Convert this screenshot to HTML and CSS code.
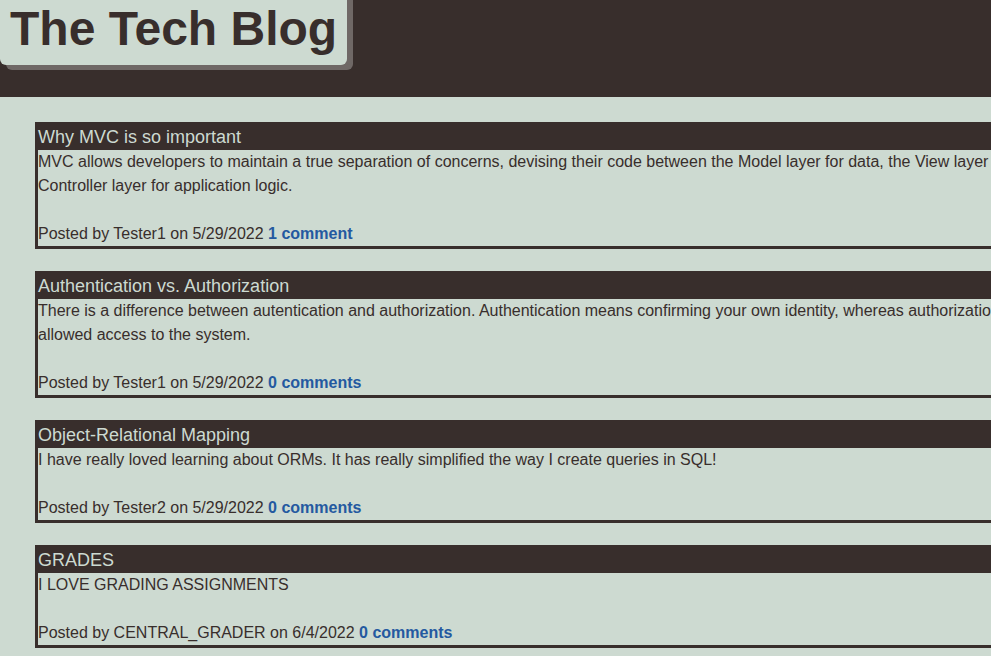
FILE: index.html
```html
<!DOCTYPE html>
<html lang="en">
<head>
<meta charset="utf-8">
<meta name="viewport" content="width=device-width, initial-scale=1">
<title>The Tech Blog</title>
<link rel="stylesheet" href="styles.css">
</head>
<body>
<header class="site-header">
  <h1 class="site-title">The Tech Blog</h1>
</header>
<main class="posts">
  <article class="post">
    <h2 class="post-title">Why MVC is so important</h2>
    <p class="post-text">MVC allows developers to maintain a true separation of concerns, devising their code between the Model layer for data, the View layer<br>Controller layer for application logic.</p>
    <p class="post-meta">Posted by Tester1 on 5/29/2022 <a class="comments" href="#">1 comment</a></p>
  </article>
  <article class="post">
    <h2 class="post-title">Authentication vs. Authorization</h2>
    <p class="post-text">There is a difference between autentication and authorization. Authentication means confirming your own identity, whereas authorizatio<br>allowed access to the system.</p>
    <p class="post-meta">Posted by Tester1 on 5/29/2022 <a class="comments" href="#">0 comments</a></p>
  </article>
  <article class="post">
    <h2 class="post-title">Object-Relational Mapping</h2>
    <p class="post-text">I have really loved learning about ORMs. It has really simplified the way I create queries in SQL!</p>
    <p class="post-meta">Posted by Tester2 on 5/29/2022 <a class="comments" href="#">0 comments</a></p>
  </article>
  <article class="post">
    <h2 class="post-title">GRADES</h2>
    <p class="post-text">I LOVE GRADING ASSIGNMENTS</p>
    <p class="post-meta">Posted by CENTRAL_GRADER on 6/4/2022 <a class="comments" href="#">0 comments</a></p>
  </article>
</main>
</body>
</html>
```
FILE: styles.css
```css
:root {
  --dark: #382e2c;
  --light: #cddad1;
  --shadow: #6f6866;
  --link: #2459a0;
}

* {
  box-sizing: border-box;
  margin: 0;
}

body {
  overflow-x: hidden;
  background: var(--light);
  color: var(--dark);
  font-family: "Liberation Sans", Arial, sans-serif;
  font-size: 16px;
  line-height: 24px;
}

.site-header {
  display: flex;
  padding-bottom: 32px;
  background: var(--dark);
}

.site-title {
  padding: 0 10px 8px;
  border-radius: 0 0 6px 6px;
  background: var(--light);
  box-shadow: 6px 0 0 var(--shadow), 6px 5px 0 var(--shadow);
  font-size: 48px;
  line-height: 57px;
}

.posts {
  display: flex;
  flex-direction: column;
  gap: 22px;
  padding: 25px 0 7px 35px;
}

.post {
  border: 3px solid var(--dark);
  border-right: 0;
}

.post-title {
  background: var(--dark);
  color: var(--light);
  font-size: 18px;
  font-weight: 400;
  line-height: 25px;
}

.post-text {
  margin-bottom: 24px;
  white-space: nowrap;
}

.comments {
  color: var(--link);
  font-weight: 700;
  text-decoration: none;
}
```
